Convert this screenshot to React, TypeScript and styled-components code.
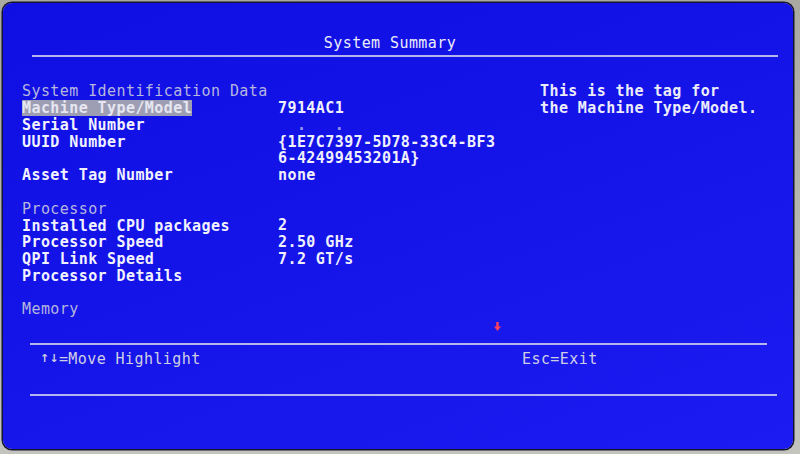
import React from "react";
import styled, { createGlobalStyle } from "styled-components";

const GlobalStyle = createGlobalStyle`
  html, body, #root { margin: 0; padding: 0; width: 800px; height: 454px; overflow: hidden; }
  body {
    background: linear-gradient(180deg, #a9a9a2 0%, #b9b9b3 60%, #c4c4be 100%);
    font-family: "DejaVu Sans Mono", "Liberation Mono", monospace;
  }
`;

const Bezel = styled.div`
  width: 800px;
  height: 454px;
  padding: 3px 7px 5px 3px;
  box-sizing: border-box;
  display: flex;
`;

const Screen = styled.div`
  flex: 1;
  display: flex;
  flex-direction: column;
  border-radius: 9px;
  background: linear-gradient(160deg, #0f0fe4 0%, #1414e8 45%, #1c1cf2 100%);
  box-shadow: 0 0 0 1.5px #15152e;
  overflow: hidden;
  font-size: 15px;
  letter-spacing: 0.42px;
  line-height: 16.75px;
  color: #f2f2ff;
  white-space: pre;
`;

const Title = styled.div`
  margin-top: 31.5px;
  padding-right: 16px;
  text-align: center;
  color: #ececf8;
`;

const Rule = styled.div<{ $left: number; $right: number; $top: number }>`
  height: 2px;
  margin: ${(p) => p.$top}px ${(p) => p.$right}px 0 ${(p) => p.$left}px;
  background: #c6c6ee;
  opacity: 0.9;
`;

const Content = styled.div`
  margin-top: 26px;
  padding-left: 19px;
  display: grid;
  grid-template-columns: 518px 1fr;
`;

const List = styled.div`
  display: flex;
  flex-direction: column;
`;

const Row = styled.div`
  display: grid;
  grid-template-columns: 256px 1fr;
  height: 16.75px;
`;

const Section = styled.div`
  height: 16.75px;
  color: #b6b6de;
`;

const Label = styled.span<{ $selected?: boolean }>`
  font-weight: bold;
  color: ${(p) => (p.$selected ? "#e6e6f0" : "#f2f2ff")};
  justify-self: start;
  display: inline-block;
  height: 16px;
  line-height: 16px;
  margin-top: 0.4px;
  background: ${(p) => (p.$selected ? "#9d9db4" : "transparent")};
`;

const Value = styled.span`
  font-weight: bold;
  color: #f0f0fc;
`;

const Faint = styled.span`
  color: #9a9af0;
  font-weight: bold;
`;

const Help = styled.div`
  display: flex;
  flex-direction: column;
  font-weight: bold;
  color: #ededfa;
`;

const ScrollRow = styled.div`
  height: 16.75px;
  padding-left: 472px;
  display: flex;
  align-items: center;
`;

const Footer = styled.div`
  margin-top: 6px;
  padding-left: 37px;
  display: grid;
  grid-template-columns: 482px auto;
  color: #cfcfe4;
  height: 16.75px;
`;

const Keys = styled.span`
  display: flex;
  align-items: center;
`;

const Arrow = styled.span`
  display: inline-block;
  width: 9.45px;
  text-align: center;
  font-family: "DejaVu Sans", sans-serif;
  font-weight: bold;
  font-size: 11px;
  letter-spacing: 0;
`;

type Item = {
  kind: "section" | "item" | "blank";
  label?: string;
  value?: React.ReactNode;
  selected?: boolean;
};

const rows: Item[] = [
  { kind: "section", label: "System Identification Data" },
  { kind: "item", label: "Machine Type/Model", value: "7914AC1", selected: true },
  { kind: "item", label: "Serial Number", value: <Faint>{"  .   ."}</Faint> },
  { kind: "item", label: "UUID Number", value: "{1E7C7397-5D78-33C4-BF3" },
  { kind: "item", label: "", value: "6-42499453201A}" },
  { kind: "item", label: "Asset Tag Number", value: "none" },
  { kind: "blank" },
  { kind: "section", label: "Processor" },
  { kind: "item", label: "Installed CPU packages", value: "2" },
  { kind: "item", label: "Processor Speed", value: "2.50 GHz" },
  { kind: "item", label: "QPI Link Speed", value: "7.2 GT/s" },
  { kind: "item", label: "Processor Details", value: "" },
  { kind: "blank" },
  { kind: "section", label: "Memory" },
];

function DownMark() {
  return (
    <svg width="7" height="9" viewBox="0 0 7 9">
      <rect x="2.3" y="0" width="2.4" height="5.5" fill="#ff3f5c" />
      <path d="M0 4.6 H7 L3.5 9 Z" fill="#ff3f5c" />
    </svg>
  );
}

export default function App() {
  return (
    <>
      <GlobalStyle />
      <Bezel>
        <Screen>
          <Title>System Summary</Title>
          <Rule $left={29} $right={15} $top={4} />
          <Content>
            <List>
              {rows.map((r, i) =>
                r.kind === "section" ? (
                  <Section key={i}>{r.label}</Section>
                ) : r.kind === "blank" ? (
                  <Section key={i} />
                ) : (
                  <Row key={i}>
                    <Label $selected={r.selected}>{r.label}</Label>
                    <Value>{r.value}</Value>
                  </Row>
                )
              )}
              <ScrollRow>
                <DownMark />
              </ScrollRow>
            </List>
            <Help>
              <span>This is the tag for</span>
              <span>the Machine Type/Model.</span>
            </Help>
          </Content>
          <Rule $left={27} $right={26} $top={8.6} />
          <Footer>
            <Keys>
              <Arrow>↑</Arrow>
              <Arrow>↓</Arrow>
              <span>=Move Highlight</span>
            </Keys>
            <span>Esc=Exit</span>
          </Footer>
          <Rule $left={27} $right={16} $top={26} />
        </Screen>
      </Bezel>
    </>
  );
}
